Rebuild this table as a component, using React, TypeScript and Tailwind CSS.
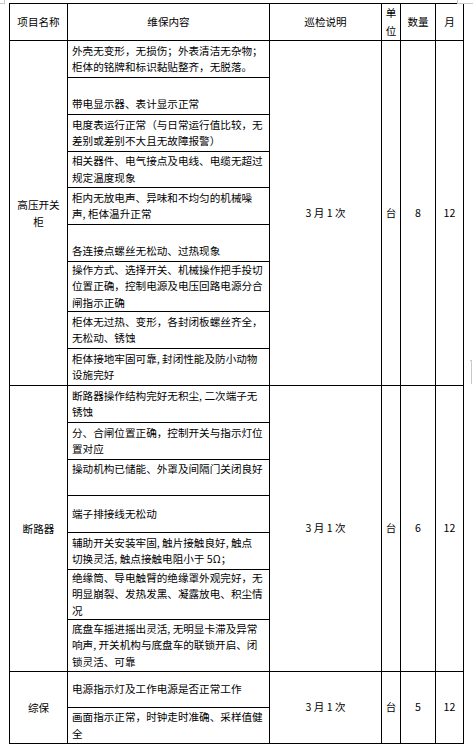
import React from "react";

type Section = {
  name: string[];
  rows: string[][];
  note: string;
  unit: string;
  qty: string;
  month: string;
};

const SECTIONS: Section[] = [
  {
    name: ["高压开关", "柜"],
    rows: [
      ["外壳无变形，无损伤；外表清洁无杂物；", "柜体的铭牌和标识黏贴整齐，无脱落。"],
      ["", "带电显示器、表计显示正常"],
      ["电度表运行正常（与日常运行值比较，无", "差别或差别不大且无故障报警）"],
      ["相关器件、电气接点及电线、电缆无超过", "规定温度现象"],
      ["柜内无放电声、异味和不均匀的机械噪", "声, 柜体温升正常"],
      ["", "各连接点螺丝无松动、过热现象"],
      ["操作方式、选择开关、机械操作把手投切", "位置正确，控制电源及电压回路电源分合", "闸指示正确"],
      ["柜体无过热、变形，各封闭板螺丝齐全，", "无松动、锈蚀"],
      ["柜体接地牢固可靠, 封闭性能及防小动物", "设施完好"],
    ],
    note: "3 月 1 次",
    unit: "台",
    qty: "8",
    month: "12",
  },
  {
    name: ["断路器"],
    rows: [
      ["断路器操作结构完好无积尘, 二次端子无", "锈蚀"],
      ["分、合闸位置正确，控制开关与指示灯位", "置对应"],
      ["操动机构已储能、外罩及间隔门关闭良好", ""],
      ["端子排接线无松动"],
      ["辅助开关安装牢固, 触片接触良好, 触点", "切换灵活, 触点接触电阻小于 5Ω；"],
      ["绝缘筒、导电触臂的绝缘罩外观完好，无", "明显崩裂、发热发黑、凝露放电、积尘情", "况"],
      ["底盘车摇进摇出灵活, 无明显卡滞及异常", "响声, 开关机构与底盘车的联锁开启、闭", "锁灵活、可靠"],
    ],
    note: "3 月 1 次",
    unit: "台",
    qty: "6",
    month: "12",
  },
  {
    name: ["综保"],
    rows: [
      ["电源指示灯及工作电源是否正常工作"],
      ["画面指示正常，时钟走时准确、采样值健", "全"],
    ],
    note: "3 月 1 次",
    unit: "台",
    qty: "5",
    month: "12",
  },
];

const SPAN: Record<number, string> = {
  9: "row-span-9",
  7: "row-span-7",
  2: "row-span-2",
};

const cell = "bg-white flex items-center justify-center text-center";

function Lines({ lines }: { lines: string[] }) {
  return (
    <div>
      {lines.map((l, i) => (
        <div key={i} className="h-[16.5px] whitespace-nowrap">
          {l || "\u00a0"}
        </div>
      ))}
    </div>
  );
}

export default function App() {
  return (
    <div
      className="relative w-[473px] h-[747px] bg-white text-black text-[10.6px] leading-[16.5px]"
      style={{ fontFamily: '"Noto Sans CJK SC", "Noto Sans", sans-serif' }}
    >
      {/* page corner marks */}
      <div className="absolute left-0 top-[3px] w-[5px] h-px bg-[#c8c8c8]" />
      <div className="absolute left-[4px] top-0 w-px h-[4px] bg-[#c8c8c8]" />
      <div className="absolute left-[457px] top-[3px] w-[16px] h-px bg-[#c8c8c8]" />
      <div className="absolute left-[457px] top-0 w-px h-[4px] bg-[#c8c8c8]" />
      <div className="absolute left-[471px] top-[360px] w-px h-[24px] bg-[#c8c8c8]" />
      <div className="absolute left-[470px] top-[360px] w-[2px] h-px bg-[#c8c8c8]" />

      <div className="pt-[3px] pl-[9px]">
        <div className="grid w-[455px] bg-black gap-px p-px grid-cols-[57px_201px_111px_18px_34px_27px] grid-rows-[36px_36px_36px_36px_35px_36px_36px_49px_36px_36px_36px_36px_35px_36px_36px_49px_51px_35px_35px]">
          <div className={cell}>项目名称</div>
          <div className={cell}>维保内容</div>
          <div className={cell}>巡检说明</div>
          <div className={`${cell} leading-[18px]`}>
            <div>
              单<br />位
            </div>
          </div>
          <div className={cell}>数量</div>
          <div className={cell}>月</div>

          {SECTIONS.map((s) => {
            const span = SPAN[s.rows.length];
            return (
              <React.Fragment key={s.name.join("")}>
                <div className={`${cell} ${span} col-start-1 leading-[17px]`}>
                  <div>
                    {s.name.map((n) => (
                      <div key={n}>{n}</div>
                    ))}
                  </div>
                </div>
                {s.rows.map((r, i) => (
                  <React.Fragment key={i}>
                    <div className="bg-white col-start-2 flex items-center pl-[4px]">
                      <Lines lines={r} />
                    </div>
                    {i === 0 && (
                      <>
                        <div className={`${cell} ${span}`}>{s.note}</div>
                        <div className={`${cell} ${span}`}>{s.unit}</div>
                        <div className={`${cell} ${span}`}>{s.qty}</div>
                        <div className={`${cell} ${span}`}>{s.month}</div>
                      </>
                    )}
                  </React.Fragment>
                ))}
              </React.Fragment>
            );
          })}
        </div>
      </div>
    </div>
  );
}
